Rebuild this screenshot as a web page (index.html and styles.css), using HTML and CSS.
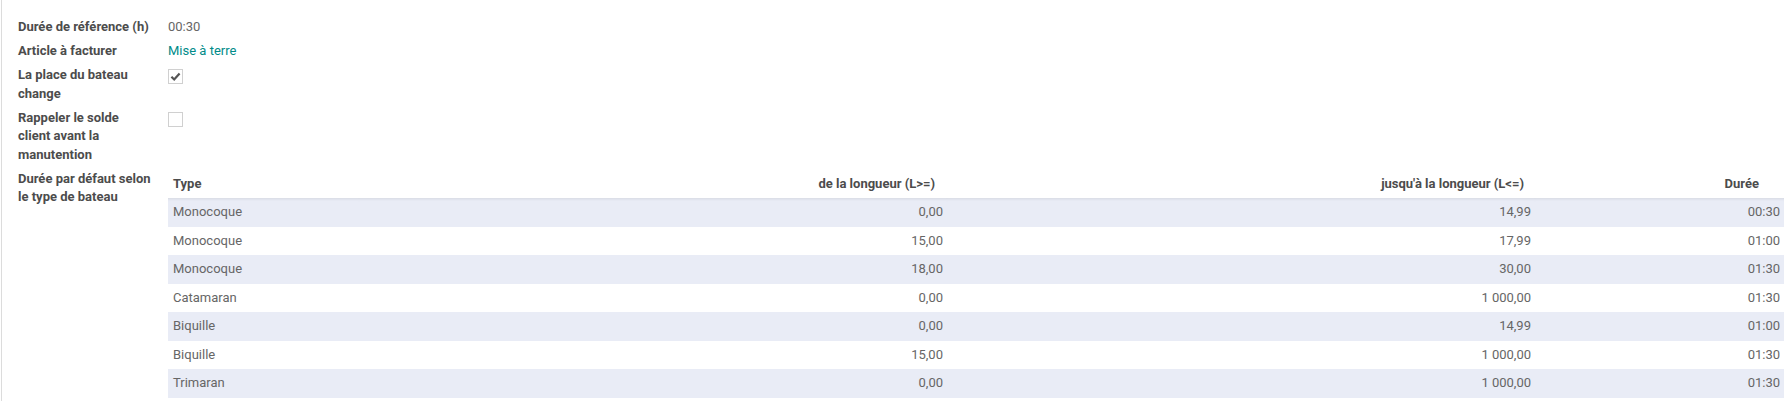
FILE: index.html
```html
<!DOCTYPE html>
<html lang="fr">
<head>
<meta charset="utf-8">
<title>Manutention</title>
<link rel="stylesheet" href="styles.css">
</head>
<body>
<div class="sheet">
  <div class="group">
    <div class="label">Durée de référence (h)</div>
    <div class="value">00:30</div>

    <div class="label">Article à facturer</div>
    <div class="value"><a class="link" href="#">Mise à terre</a></div>

    <div class="label">La place du bateau change</div>
    <div class="value"><span class="checkbox checked"><svg viewBox="0 0 14 14" width="13" height="13"><path d="M2.6 7.2 L5.6 10.2 L11.4 3.8" fill="none" stroke="#555" stroke-width="2.4" stroke-linecap="butt" stroke-linejoin="miter"/></svg></span></div>

    <div class="label">Rappeler le solde client avant la manutention</div>
    <div class="value"><span class="checkbox"></span></div>

    <div class="label">Durée par défaut selon le type de bateau</div>
    <div class="value">
      <table class="list">
        <colgroup>
          <col class="c-type"><col class="c-num"><col class="c-num"><col class="c-dur">
        </colgroup>
        <thead>
          <tr>
            <th class="left">Type</th>
            <th class="right h2">de la longueur (L&gt;=)</th>
            <th class="right h3">jusqu'à la longueur (L&lt;=)</th>
            <th class="right h4">Durée</th>
          </tr>
        </thead>
        <tbody>
          <tr><td>Monocoque</td><td class="right">0,00</td><td class="right">14,99</td><td class="right">00:30</td></tr>
          <tr><td>Monocoque</td><td class="right">15,00</td><td class="right">17,99</td><td class="right">01:00</td></tr>
          <tr><td>Monocoque</td><td class="right">18,00</td><td class="right">30,00</td><td class="right">01:30</td></tr>
          <tr><td>Catamaran</td><td class="right">0,00</td><td class="right">1&nbsp;000,00</td><td class="right">01:30</td></tr>
          <tr><td>Biquille</td><td class="right">0,00</td><td class="right">14,99</td><td class="right">01:00</td></tr>
          <tr><td>Biquille</td><td class="right">15,00</td><td class="right">1&nbsp;000,00</td><td class="right">01:30</td></tr>
          <tr><td>Trimaran</td><td class="right">0,00</td><td class="right">1&nbsp;000,00</td><td class="right">01:30</td></tr>
        </tbody>
      </table>
    </div>
  </div>
</div>
</body>
</html>
```

FILE: styles.css
```css
html, body {
  margin: 0;
  padding: 0;
  background: #ffffff;
  overflow: hidden;
}

body {
  font-family: Roboto, "Noto Sans", "Liberation Sans", sans-serif;
  font-size: 13px;
  line-height: 18.5px;
  color: #666666;
}

.sheet {
  margin-left: 1px;
  border-left: 1px solid #dcdcdc;
  padding: 18px 7px 0 16px;
  min-height: 401px;
  box-sizing: border-box;
}

.group {
  display: grid;
  grid-template-columns: 150px 1fr;
  row-gap: 5.5px;
}

.label {
  font-weight: 700;
  color: #4c4c4c;
  padding-right: 15px;
}

.value {
  color: #666666;
  min-width: 0;
}

.link {
  color: #018b89;
  text-decoration: none;
}

.checkbox {
  display: flex;
  align-items: center;
  justify-content: center;
  width: 15px;
  height: 15px;
  margin-top: 3px;
  box-sizing: border-box;
  border: 1px solid #d0d0d0;
  background: #ffffff;
}

.list {
  width: 100%;
  border-collapse: collapse;
  table-layout: fixed;
}

.c-type { width: 191px; }
.c-num { width: 588px; }
.c-dur { width: 249px; }

.list th,
.list td {
  height: 28.57px;
  padding: 0 4px 0 5px;
  box-sizing: border-box;
  white-space: nowrap;
  vertical-align: middle;
}

.list th {
  font-weight: 700;
  color: #4c4c4c;
  text-align: left;
}

.list td {
  color: #666666;
}

.list .right { text-align: right; }
.list .left { text-align: left; }

.list th.h2 { padding-right: 12px; }
.list th.h3 { padding-right: 11px; }
.list th.h4 { padding-right: 25px; }

.list tbody tr:nth-child(odd) td {
  background: #e9ecf6;
}

.list tbody tr:first-child td {
  box-shadow: inset 0 3px 3px -2px rgba(0, 0, 0, 0.09);
}
```
